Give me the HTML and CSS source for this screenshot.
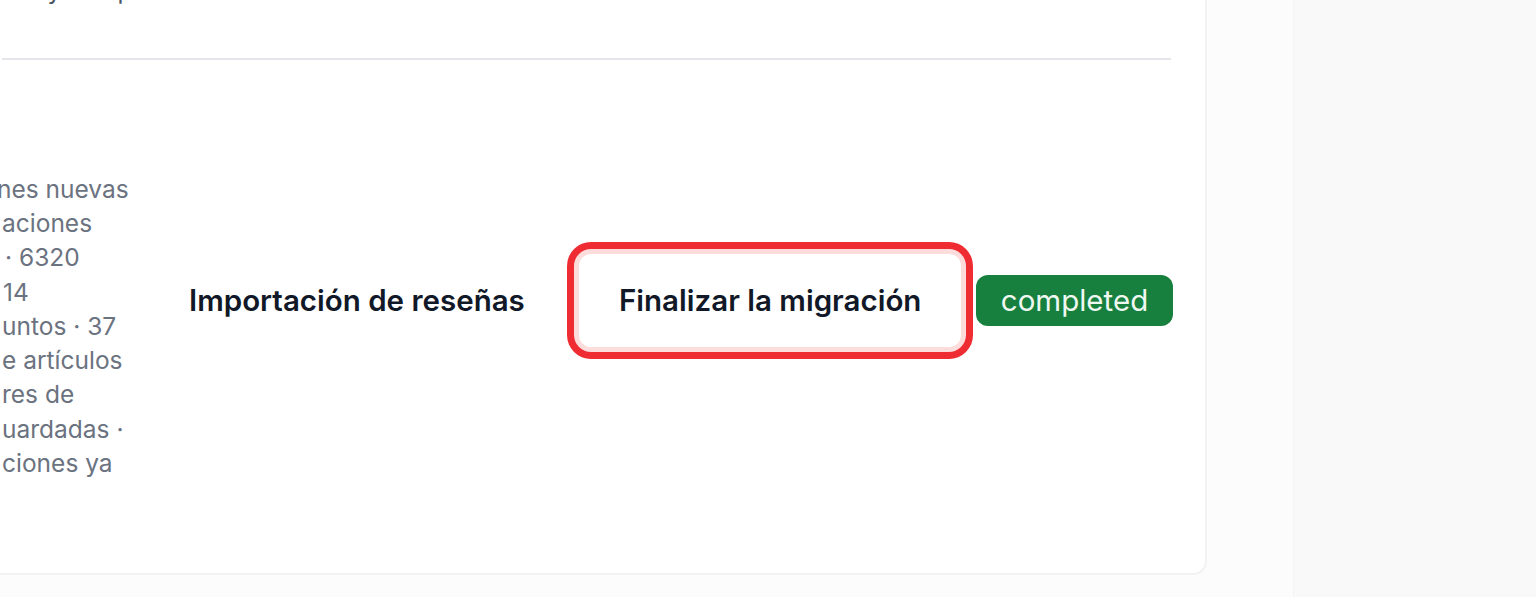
FILE: index.html
```html
<!DOCTYPE html>
<html lang="es">
<head>
<meta charset="utf-8">
<title>Migración</title>
<link rel="stylesheet" href="styles.css">
</head>
<body>
<div class="layout">
  <main class="main">
    <section class="card">
      <div class="prev-row">
        <p class="prev-text">Mayo ha pasado</p>
      </div>
      <div class="row">
        <div class="desc">
          <span class="line line-first">nes nuevas</span>
          <span class="line">aciones</span>
          <span class="line line-dot">· 6320</span>
          <span class="line line-num">14</span>
          <span class="line">untos · 37</span>
          <span class="line">e artículos</span>
          <span class="line">res de</span>
          <span class="line">uardadas ·</span>
          <span class="line">ciones ya</span>
        </div>
        <div class="title">Importación de reseñas</div>
        <div class="action">
          <button class="btn" type="button">Finalizar la migración</button>
        </div>
        <div class="status">
          <span class="badge">completed</span>
        </div>
      </div>
    </section>
  </main>
  <aside class="side"></aside>
</div>
</body>
</html>
```
FILE: styles.css
```css
* { box-sizing: border-box; }
html, body { margin: 0; padding: 0; }
body {
  font-family: Inter, "Noto Sans", "Liberation Sans", sans-serif;
  background: #fcfcfd;
  overflow: hidden;
  height: 597px;
}
.layout {
  display: flex;
  height: 597px;
}
.main {
  flex: 1;
  background: #fcfcfd;
  padding: 0 86px 22px 0;
  display: flex;
  flex-direction: column;
  justify-content: flex-end;
  overflow: hidden;
}
.side {
  width: 243px;
  background: #f9f9fa;
  border-left: 1px solid #f3f4f5;
}
.card {
  background: #ffffff;
  border: 2px solid #f1f2f4;
  border-radius: 14px;
  margin-left: -36px;
  padding: 0 34px 33px 36px;
}
.prev-row {
  padding-bottom: 51px;
}
.prev-text {
  margin: 0;
  font-size: 24.5px;
  line-height: 34px;
  color: #4b5563;
  padding-left: 10px;
}
.row {
  border-top: 2px solid #e4e6eb;
  min-height: 482px;
  display: grid;
  grid-template-columns: 187px 390px 397px 197px;
  align-items: center;
}
.desc {
  display: flex;
  flex-direction: column;
  font-size: 24.5px;
  line-height: 34.3px;
  color: #6b7280;
  padding-top: 52px;
  white-space: nowrap;
}
.line-first { margin-left: -5px; }
.line-dot { padding-left: 3px; }
.line-num { padding-left: 1px; }
.title {
  font-size: 29.5px;
  font-weight: 600;
  color: #111827;
}
.action { display: flex; }
.btn {
  font-family: inherit;
  font-size: 29.5px;
  font-weight: 600;
  color: #111827;
  background: #ffffff;
  border: none;
  border-radius: 12px;
  padding: 0 40px;
  height: 93px;
  box-shadow: 0 0 0 5px #fddcdc, 0 0 0 12px #ee2c31;
}
.status { display: flex; justify-content: flex-end; }
.badge {
  display: inline-flex;
  align-items: center;
  justify-content: center;
  width: 197px;
  height: 51px;
  border-radius: 12px;
  background: #17803e;
  color: #eef8f1;
  font-size: 29.5px;
}
```
